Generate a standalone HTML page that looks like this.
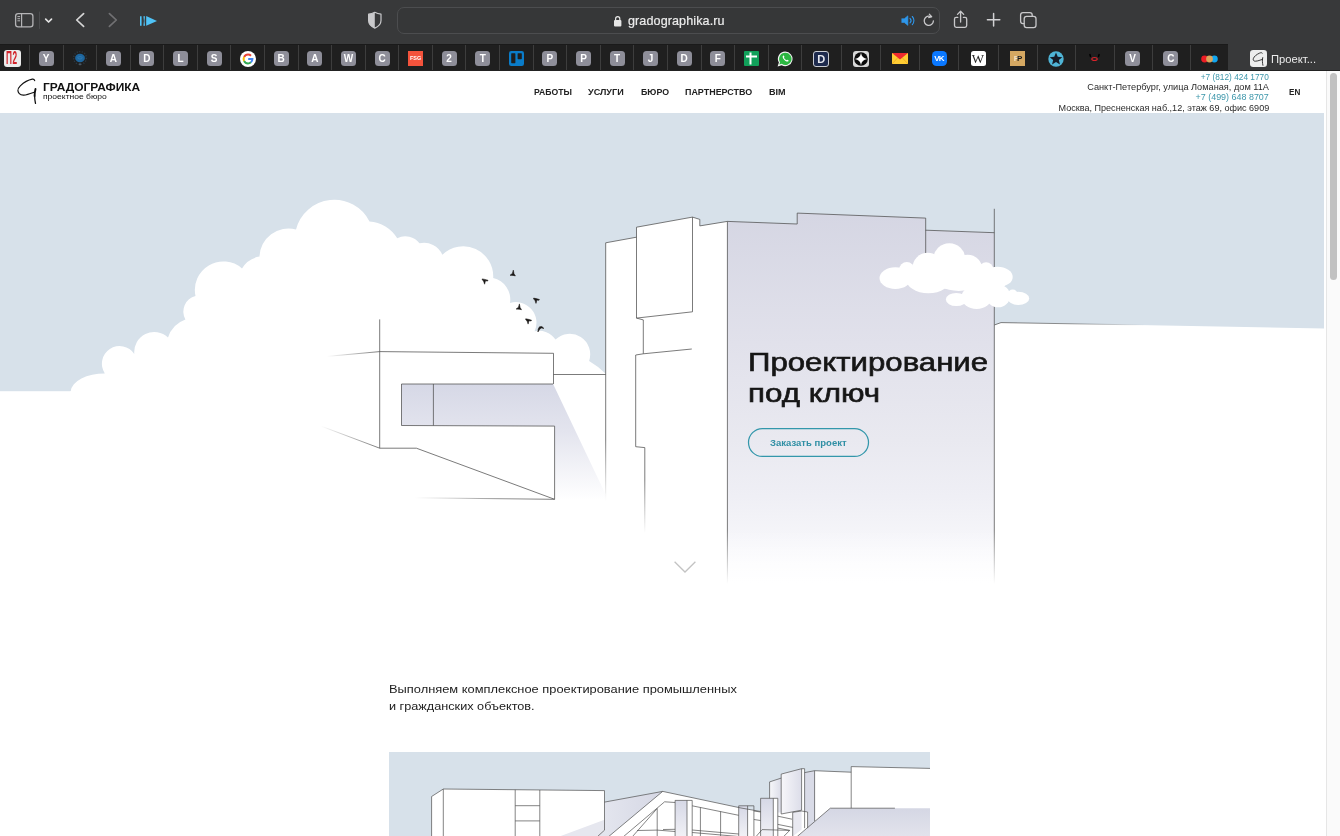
<!DOCTYPE html>
<html lang="ru">
<head>
<meta charset="utf-8">
<title>Проектирование под ключ</title>
<style>
*{box-sizing:border-box;margin:0;padding:0}
html,body{width:1340px;height:836px;overflow:hidden;background:#fff}
body{position:relative;-webkit-font-smoothing:antialiased;font-family:"Liberation Sans",sans-serif;color:#1d1d1d}
.abs{position:absolute}
#toolbar{left:0;top:0;width:1340px;height:45px;background:#38393a}
#toolbar svg{position:absolute;left:0;top:0}
#urlbar{left:396.5px;top:7px;width:543.5px;height:27px;border:1px solid #4c4d4f;border-radius:7px;background:#363738}
#urltext{left:627.5px;top:12px;height:18px;line-height:18px;font-size:13px;color:#ececec;-webkit-text-stroke:.2px #ececec;white-space:nowrap;letter-spacing:.1px;transform-origin:0 50%}
#tabbar{left:0;top:44px;width:1340px;height:27px;background:#1f1f1f;border-top:1px solid #1a1a1a}
.sep{position:absolute;top:45px;width:1px;height:26px;background:#3d3d3d}
.fav{position:absolute;top:51px;width:15px;height:15px;border-radius:3.5px;background:#8e8e99;color:#fff;font-weight:bold;font-size:10px;line-height:15px;text-align:center}
#acttab{left:1228px;top:44px;width:112px;height:27px;background:#38393a}
#acttxt{left:1270.700px;top:50.600px;font-size:11.5px;line-height:16px;color:#ececec;white-space:nowrap;transform-origin:0 50%}
#header{left:0;top:71px;width:1324px;height:42px;background:#fff}
.nav{position:absolute;top:86px;height:12px;line-height:12px;font-size:9px;font-weight:bold;color:#222;white-space:nowrap;transform-origin:0 50%}
.addr{position:absolute;right:71px;height:10px;line-height:10px;font-size:9px;color:#2a2a2a;white-space:nowrap;transform-origin:100% 50%}
.tel{color:#3d97ab}
#tabline{left:0;top:70px;width:1340px;height:1px;background:#222}
#scroll{left:1325.500px;top:71px;width:14.500px;height:765px;background:#fafafa;border-left:1px solid #e6e6e6}
#thumb{left:1330px;top:73px;width:7px;height:207px;border-radius:4px;background:#c1c1c1}
#h1{left:747.600px;top:347px;font-size:25px;line-height:31px;font-weight:normal;-webkit-text-stroke:.6px #161616;color:#161616;white-space:nowrap;transform-origin:0 0}
#btn{left:748px;top:429px;width:121px;height:28px;border:1px solid #3c98ab;border-radius:14px}
#btntxt{left:770px;top:437px;font-size:8.5px;line-height:12px;font-weight:bold;color:#2f8fa4;white-space:nowrap;transform-origin:0 50%}
.p{position:absolute;left:389px;font-size:11.5px;line-height:16px;color:#222;white-space:nowrap;transform-origin:0 50%}
#urltext{transform:scaleX(0.9671)}
#acttxt{transform:scaleX(.975)}
#logo1{transform:scaleX(1.1935)}
#logo2{transform:scaleX(1.1348)}
#n1{transform:scaleX(0.9595)}
#n2{transform:scaleX(1.0096)}
#n3{transform:scaleX(0.9777)}
#n4{transform:scaleX(0.9928)}
#n5{transform:scaleX(1.0061)}
#n6{transform:scaleX(0.9026)}
#a1{transform:scaleX(0.9226)}
#a2{transform:scaleX(1.0215)}
#a3{transform:scaleX(0.9931)}
#a4{transform:scaleX(1.0070)}
#h1a{display:inline-block;transform-origin:0 50%;transform:scaleX(1.2458)}
#h1b{display:inline-block;transform-origin:0 50%;transform:scaleX(1.2527)}
#btntxt{transform:scaleX(1.1200)}
#p1{transform:scaleX(1.1180)}
#p2{transform:scaleX(1.1023)}
</style>
</head>
<body>
<div id="wrap" style="position:absolute;left:0;top:0;width:1340px;height:836px;will-change:transform;transform:translateZ(0)">
<!--TOOLBAR-->
<div id="toolbar" class="abs">
<div id="urlbar" class="abs"></div>
<svg width="1340" height="45" viewBox="0 0 1340 45" fill="none" stroke-linecap="round" stroke-linejoin="round">
<!-- sidebar -->
<rect x="15.6" y="13.6" width="17.3" height="13.2" rx="2.6" stroke="#b4b4b6" stroke-width="1.3"/>
<path d="M21.6 13.8V26.6" stroke="#b4b4b6" stroke-width="1.2"/>
<path d="M17.8 16.6h1.9M17.8 18.7h1.9M17.8 20.8h1.9" stroke="#b4b4b6" stroke-width="1"/>
<path d="M39.5 12v16.5" stroke="#4c4d4f" stroke-width="1"/>
<path d="M45.7 19.2l2.9 2.8 2.9-2.8" stroke="#e4e4e4" stroke-width="1.7"/>
<!-- back / forward -->
<path d="M83.6 13.6l-6.9 6.4 6.9 6.4" stroke="#d6d6d6" stroke-width="1.7"/>
<path d="M109.4 13.6l6.9 6.4-6.9 6.4" stroke="#717173" stroke-width="1.7"/>
<!-- blue play icon -->
<path d="M140 16.2h1.6v9.6H140zM143.4 16.2h1.6l-.5 4.8.5 4.8h-1.6l.5-4.8z" fill="#4fc3f7" stroke="none"/>
<path d="M146.2 16l10.8 4.9-10.8 4.9z" fill="#4fc3f7" stroke="none"/>
<!-- shield -->
<path d="M374.8 12.3c2 1.1 4 1.7 6.2 1.9v6.3c0 3.6-2.4 6-6.2 7.6-3.800-1.600-6.200-4-6.200-7.600v-6.300c2.200-.2 4.200-.8 6.200-1.900z" stroke="#c9c9cb" stroke-width="1.2"/>
<path d="M374.8 12.3v15.8c-3.800-1.600-6.200-4-6.200-7.600v-6.300c2.200-.2 4.200-.8 6.200-1.900z" fill="#c9c9cb" stroke="none"/>
<!-- lock -->
<rect x="614" y="20" width="7.4" height="6.6" rx="1.1" fill="#e6e6e6" stroke="none"/>
<path d="M615.600 20.400v-1.700a2.100 2.100 0 0 1 4.200 0v1.700" stroke="#e6e6e6" stroke-width="1.2"/>
<!-- speaker -->
<path d="M902 18.700h2.300l3.600-2.900v9.600l-3.600-2.900H902z" fill="#2e96ea" stroke="#2e96ea" stroke-width=".6"/>
<path d="M910 18.300a3.300 3.300 0 0 1 0 4.600" stroke="#2e96ea" stroke-width="1.100"/>
<path d="M912.300 16.500a6 6 0 0 1 0 8.200" stroke="#2e96ea" stroke-width="1.100"/>
<!-- reload -->
<path d="M933.400 20.800a4.600 4.600 0 1 1-2.300-4" stroke="#c9c9cb" stroke-width="1.300"/>
<path d="M929.300 14.200l2.400 2.500-3 .9" stroke="#c9c9cb" stroke-width="1.200"/>
<!-- share -->
<path d="M957.800 17.400h-1.600a1.700 1.700 0 0 0-1.700 1.700v6.500a1.700 1.700 0 0 0 1.700 1.700h8.800a1.700 1.700 0 0 0 1.700-1.700v-6.500a1.700 1.700 0 0 0-1.700-1.700h-1.600" stroke="#c9c9cb" stroke-width="1.300"/>
<path d="M960.600 22V11.600M957.500 14.400l3.100-3.100 3.100 3.100" stroke="#c9c9cb" stroke-width="1.300"/>
<!-- plus -->
<path d="M987.400 19.800h12.400M993.600 13.600V26" stroke="#d2d2d4" stroke-width="1.500"/>
<!-- tabs -->
<rect x="1024.200" y="16.400" width="11.800" height="11.200" rx="2.400" stroke="#c9c9cb" stroke-width="1.300"/>
<path d="M1024 23.600h-1a2.400 2.400 0 0 1-2.400-2.400v-6.200a2.400 2.400 0 0 1 2.400-2.400h6.800a2.400 2.400 0 0 1 2.400 2.400v1" stroke="#c9c9cb" stroke-width="1.300"/>
</svg>
<div id="urltext" class="abs">gradographika.ru</div>
</div>
<!--TABBAR-->
<div id="tabbar" class="abs"></div>
<div class="sep" style="left:28.9px"></div>
<div class="sep" style="left:62.5px"></div>
<div class="sep" style="left:96.1px"></div>
<div class="sep" style="left:129.6px"></div>
<div class="sep" style="left:163.2px"></div>
<div class="sep" style="left:196.8px"></div>
<div class="sep" style="left:230.4px"></div>
<div class="sep" style="left:264.0px"></div>
<div class="sep" style="left:297.5px"></div>
<div class="sep" style="left:331.1px"></div>
<div class="sep" style="left:364.7px"></div>
<div class="sep" style="left:398.3px"></div>
<div class="sep" style="left:431.9px"></div>
<div class="sep" style="left:465.4px"></div>
<div class="sep" style="left:499.0px"></div>
<div class="sep" style="left:532.6px"></div>
<div class="sep" style="left:566.2px"></div>
<div class="sep" style="left:599.8px"></div>
<div class="sep" style="left:633.3px"></div>
<div class="sep" style="left:666.9px"></div>
<div class="sep" style="left:700.5px"></div>
<div class="sep" style="left:734.1px"></div>
<div class="sep" style="left:767.7px"></div>
<div class="sep" style="left:801.2px"></div>
<div class="sep" style="left:840.5px"></div>
<div class="sep" style="left:879.8px"></div>
<div class="sep" style="left:919.0px"></div>
<div class="sep" style="left:958.2px"></div>
<div class="sep" style="left:997.5px"></div>
<div class="sep" style="left:1037.0px"></div>
<div class="sep" style="left:1075.3px"></div>
<div class="sep" style="left:1113.7px"></div>
<div class="sep" style="left:1152.0px"></div>
<div class="sep" style="left:1190.0px"></div>
<div class="fav" style="left:4px;top:50px;width:17px;height:17px;border-radius:3px;background:#ececec;color:#d2232a;overflow:hidden"><span style="position:absolute;left:2.400px;top:-1.600px;font-size:18px;line-height:20px;font-weight:bold;white-space:nowrap;display:block;transform-origin:0 50%;transform:scaleX(.46);letter-spacing:1px">П2</span></div>
<div class="fav" style="left:38.7px">Y</div>
<svg class="abs" style="left:71.8px;top:51px" width="16" height="16" viewBox="0 0 16 16"><circle cx="8" cy="7" r="6.400" fill="none" stroke="#2c3944" stroke-width="1.400" stroke-dasharray="1.100 1.500"/><ellipse cx="8" cy="7" rx="4.900" ry="4.200" fill="#1d659d"/><ellipse cx="8" cy="6.800" rx="2.200" ry="1.200" fill="none" stroke="#3784bd" stroke-width=".6"/><circle cx="8" cy="13.300" r="1.100" fill="#4d5963"/></svg>
<div class="fav" style="left:105.8px">A</div>
<div class="fav" style="left:139.4px">D</div>
<div class="fav" style="left:173.0px">L</div>
<div class="fav" style="left:206.6px">S</div>
<svg class="abs" style="left:239.7px;top:50.5px" width="16" height="16" viewBox="0 0 16 16"><circle cx="8" cy="8" r="8" fill="#fff"/><path d="M8 3.600a4.400 4.400 0 0 1 3 1.150" fill="none" stroke="#ea4335" stroke-width="2"/><path d="M8 3.600a4.400 4.400 0 0 0-3.900 2.400" fill="none" stroke="#ea4335" stroke-width="2"/><path d="M4.100 6a4.400 4.400 0 0 0 0 4" fill="none" stroke="#fbbc05" stroke-width="2"/><path d="M4.100 10a4.400 4.400 0 0 0 3.900 2.400 4.400 4.400 0 0 0 2.900-1.100" fill="none" stroke="#34a853" stroke-width="2"/><path d="M10.900 11.300a4.400 4.400 0 0 0 1.500-3.300H8.200" fill="none" stroke="#4285f4" stroke-width="2"/></svg>
<div class="fav" style="left:273.7px">B</div>
<div class="fav" style="left:307.3px">A</div>
<div class="fav" style="left:340.9px">W</div>
<div class="fav" style="left:374.5px">C</div>
<div class="fav" style="left:408.1px;border-radius:0;background:#f4533c;font-size:5.500px;letter-spacing:-.1px">FSG</div>
<div class="fav" style="left:441.6px">2</div>
<div class="fav" style="left:475.2px">T</div>
<svg class="abs" style="left:508.8px;top:51px" width="15" height="15" viewBox="0 0 15 15"><rect width="15" height="15" rx="2.200" fill="#0a7cc9"/><rect x="2.200" y="2.200" width="4.200" height="10" rx=".6" fill="#1e1e1e"/><rect x="8.600" y="2.200" width="4.200" height="6" rx=".6" fill="#1e1e1e"/></svg>
<div class="fav" style="left:542.4px">P</div>
<div class="fav" style="left:576.0px">P</div>
<div class="fav" style="left:609.5px">T</div>
<div class="fav" style="left:643.1px">J</div>
<div class="fav" style="left:676.7px">D</div>
<div class="fav" style="left:710.3px">F</div>
<svg class="abs" style="left:743.9px;top:51px" width="15" height="15" viewBox="0 0 15 15"><rect width="15" height="15" rx="1" fill="#11a05a"/><path d="M2 5.600h11M6.500 1.400v12.200" stroke="#fff" stroke-width="2" fill="none"/></svg>
<svg class="abs" style="left:776.9px;top:50.5px" width="16" height="16" viewBox="0 0 16 16"><path d="M8.200 .6a7.300 7.300 0 0 0-6.300 11l-1.300 3.900 4.100-1.200A7.300 7.300 0 1 0 8.200 .6z" fill="#f2f2f2"/><path d="M8.200 1.800a6.100 6.100 0 0 0-5.100 9.400l-.8 2.400 2.500-.8A6.100 6.100 0 1 0 8.200 1.800z" fill="#2bb741"/><path d="M6 4.800c.500-.5 1-.2 1.300.7.200.6-.4.900-.2 1.400.5 1 1.200 1.700 2.200 2.200.5.200.8-.5 1.400-.200.900.4 1.200.8.700 1.300-.8.800-2.300.5-4-1.200C5.700 7.300 5.200 5.600 6 4.800z" fill="#fff"/></svg>
<div class="fav" style="left:813.3px;top:50.5px;width:16px;height:16px;border-radius:3px;background:#1d2a4d;border:1px solid #c9ccd3;font-size:11px;line-height:14px;color:#e6e8ee">D</div>
<svg class="abs" style="left:852.5px;top:50.5px" width="16" height="16" viewBox="0 0 16 16"><rect width="16" height="16" rx="3" fill="#d8d8d8"/><circle cx="8" cy="8" r="6.800" fill="#0b0b0b"/><path d="M8 1.800c.5 3.700 2.500 5.700 6.200 6.200-3.700.5-5.700 2.500-6.200 6.200-.5-3.700-2.500-5.700-6.200-6.200 3.700-.5 5.700-2.500 6.200-6.200z" fill="#fff"/></svg>
<svg class="abs" style="left:892.0px;top:53px" width="16" height="11" viewBox="0 0 16 11"><rect width="16" height="11" fill="#ffcc33"/><path d="M0 0h16l-8 6.600z" fill="#ee2a2e"/><path d="M0 11l5.500-6M16 11l-5.500-6" stroke="#e9a81f" stroke-width=".8"/></svg>
<div class="fav" style="left:931.9px;border-radius:4.500px;background:#0a78ff;font-size:8px;letter-spacing:-.7px;text-indent:-.8px">VK</div>
<div class="fav" style="left:970.5px;border-radius:2.500px;background:#fff;color:#222;font-family:'Liberation Serif',serif;font-weight:normal;font-size:13px;line-height:15px">W</div>
<div class="fav" style="left:1010.0px;border-radius:0;background:#d5a862;color:#1a1a1a;font-size:8px;letter-spacing:-2px;text-indent:-1px"><span style="color:#f2e2c6">P</span>P</div>
<svg class="abs" style="left:1048.3px;top:50.500px" width="16" height="16" viewBox="0 0 16 16"><circle cx="8" cy="8" r="7.700" fill="#4fb4d6"/><path d="M8 1.600l1.750 4.200 4.550 .35-3.450 2.950 1.100 4.400L8 11.100l-3.950 2.400 1.100-4.400L1.700 6.150l4.550-.35z" fill="#161b26"/></svg>
<svg class="abs" style="left:1087.0px;top:51px" width="15" height="15" viewBox="0 0 15 15"><path d="M2.900 3.600l.6 1.900M12.100 3.600l-.6 1.900" stroke="#000" stroke-width="1.500" stroke-linecap="round"/><ellipse cx="7.500" cy="8" rx="2.700" ry="1.500" fill="none" stroke="#d8232a" stroke-width="1.100"/></svg>
<div class="fav" style="left:1125.0px">V</div>
<div class="fav" style="left:1163.3px">C</div>
<svg class="abs" style="left:1200.8px;top:55px" width="17" height="8" viewBox="0 0 17 8"><circle cx="3.600" cy="4" r="3.400" fill="#ec1c24"/><circle cx="13.400" cy="4" r="3.400" fill="#12a5ee"/><circle cx="8.500" cy="4" r="3.400" fill="#d9a55c"/></svg>
<div id="acttab" class="abs"></div>
<svg class="abs" style="left:1250px;top:50px" width="17" height="17" viewBox="0 0 17 17"><rect width="17" height="17" rx="3.200" fill="#ededed"/><path d="M12.300 3.100C11.800 2.400 10.800 2.600 9.600 3.100C6.800 4.300 4 6.400 3.300 8.700C2.900 10.200 3.800 11.200 5.400 11.200C7.800 11.100 10.200 10.100 12.600 9.300M12.700 7.600C12.200 9.800 12.300 12.600 12.900 15.300" fill="none" stroke="#1a1a1a" stroke-width=".85" stroke-linecap="round"/></svg>
<div id="acttxt" class="abs">Проект...</div>
<!--PAGE-->
<div id="header" class="abs"></div>
<svg class="abs" style="left:14px;top:76px" width="26" height="30" viewBox="14 76 26 30" fill="none" stroke="#111" stroke-linecap="round" stroke-linejoin="round"><path d="M34.700 80.600C34.300 79.300 33.400 79 32.300 79.200C28 80 23 83.300 20.300 85.900C18.600 87.600 17.700 89.200 17.900 90.700C18.100 92.200 18.600 93 19.300 93.700C20.400 94.800 22 95.300 23.700 95.200C27.200 94.900 31 93.400 34.600 92.100" stroke-width="1.200"/><path d="M35.500 89C34.900 91.400 34.600 93.700 34.600 95.900" stroke-width="1.900"/><path d="M34.600 95.900C34.700 98.500 35 101 35.500 103.400" stroke-width="1.300"/></svg>
<div id="logo1" class="abs" style="left:42.500px;top:81.700px;font-size:10px;line-height:12px;font-weight:bold;color:#111;white-space:nowrap;transform-origin:0 50%">ГРАДОГРАФИКА</div>
<div id="logo2" class="abs" style="left:42.500px;top:91.500px;font-size:7.500px;line-height:10px;color:#111;white-space:nowrap;transform-origin:0 50%">проектное бюро</div>
<div class="nav" id="n1" style="left:533.500px">РАБОТЫ</div>
<div class="nav" id="n2" style="left:588px">УСЛУГИ</div>
<div class="nav" id="n3" style="left:640.500px">БЮРО</div>
<div class="nav" id="n4" style="left:685px">ПАРТНЕРСТВО</div>
<div class="nav" id="n5" style="left:768.500px">BIM</div>
<div class="nav" id="n6" style="left:1289px">EN</div>
<div class="addr tel" id="a1" style="top:72px">+7 (812) 424 1770</div>
<div class="addr" id="a2" style="top:82.300px">Санкт-Петербург, улица Ломаная, дом 11А</div>
<div class="addr tel" id="a3" style="top:92.300px">+7 (499) 648 8707</div>
<div class="addr" id="a4" style="top:102.600px">Москва, Пресненская наб.,12, этаж 69, офис 6909</div>
<!--HERO-->
<svg id="hero" class="abs" style="left:0;top:113px" width="1324" height="480" viewBox="0 113 1324 480" fill="none">
<defs>
<linearGradient id="gwall" x1="0" y1="213" x2="0" y2="584" gradientUnits="userSpaceOnUse"><stop offset="0" stop-color="#d5d6e3"/><stop offset=".35" stop-color="#e1e1eb"/><stop offset=".61" stop-color="#e9e9f0"/><stop offset=".765" stop-color="#efeff5"/><stop offset=".868" stop-color="#f5f5f9"/><stop offset="1" stop-color="#fcfcfe"/></linearGradient>
<linearGradient id="grec" x1="0" y1="384" x2="0" y2="500" gradientUnits="userSpaceOnUse"><stop offset="0" stop-color="#d6d8e6"/><stop offset=".4" stop-color="#e3e4ee"/><stop offset="1" stop-color="#ffffff"/></linearGradient>
<linearGradient id="gfade" x1="0" y1="530" x2="0" y2="584" gradientUnits="userSpaceOnUse"><stop offset="0" stop-color="#fff" stop-opacity="0"/><stop offset="1" stop-color="#fff" stop-opacity="1"/></linearGradient>
<linearGradient id="gv1" x1="0" y1="440" x2="0" y2="501" gradientUnits="userSpaceOnUse"><stop offset="0" stop-color="#4f4f4f" stop-opacity="1"/><stop offset="1" stop-color="#4f4f4f" stop-opacity="0"/></linearGradient>
<linearGradient id="gv2" x1="0" y1="480" x2="0" y2="533" gradientUnits="userSpaceOnUse"><stop offset="0" stop-color="#4f4f4f" stop-opacity="1"/><stop offset="1" stop-color="#4f4f4f" stop-opacity="0"/></linearGradient>
<linearGradient id="gl1" x1="327" y1="0" x2="379.700" y2="0" gradientUnits="userSpaceOnUse"><stop offset="0" stop-color="#4f4f4f" stop-opacity="0"/><stop offset="1" stop-color="#4f4f4f" stop-opacity="1"/></linearGradient>
<linearGradient id="gl2" x1="321" y1="0" x2="379.700" y2="0" gradientUnits="userSpaceOnUse"><stop offset="0" stop-color="#4f4f4f" stop-opacity="0"/><stop offset="1" stop-color="#4f4f4f" stop-opacity="1"/></linearGradient>
<linearGradient id="gl3" x1="415" y1="0" x2="554.600" y2="0" gradientUnits="userSpaceOnUse"><stop offset="0" stop-color="#4f4f4f" stop-opacity="0"/><stop offset=".6" stop-color="#4f4f4f" stop-opacity=".8"/><stop offset="1" stop-color="#4f4f4f" stop-opacity="1"/></linearGradient>
<linearGradient id="gl4" x1="994" y1="0" x2="1145" y2="0" gradientUnits="userSpaceOnUse"><stop offset="0" stop-color="#4f4f4f" stop-opacity="1"/><stop offset=".5" stop-color="#4f4f4f" stop-opacity=".8"/><stop offset="1" stop-color="#4f4f4f" stop-opacity="0"/></linearGradient>
<linearGradient id="gfadeL" x1="300" y1="0" x2="420" y2="0" gradientUnits="userSpaceOnUse"><stop offset="0" stop-color="#fff" stop-opacity="1"/><stop offset="1" stop-color="#fff" stop-opacity="0"/></linearGradient>
</defs>
<rect x="0" y="113" width="1324" height="480" fill="#fff"/>
<rect x="0" y="113" width="1324" height="278.200" fill="#d7e1ea"/>
<!-- big cloud -->
<path id="cloud" fill="#fff" d="M70.700 391.200A34 19 0 0 1 104.800 373.400A16.800 16.800 0 0 1 134.300 354A20 20 0 0 1 168 337.600A28 28 0 0 1 185.400 319.400A16 16 0 0 1 195.500 296A28.500 28.500 0 0 1 242 268.400A25 25 0 0 1 259.500 256.600A29 29 0 0 1 296 229.400A39.500 39.500 0 0 1 369.500 221.400A35 35 0 0 1 397.200 238.200A18 18 0 0 1 419.500 243.300A20 20 0 0 1 442.400 254.800A30 30 0 0 1 493.200 278A22 22 0 0 1 510 303A20.500 20.500 0 0 1 534.600 331.200A20 20 0 0 1 555.500 339.500A20.500 20.500 0 0 1 589.100 360.900Q598 366 606 374V400H60z"/>
<!-- right white mass -->
<path d="M994.300 325L1001 322.600L1324 328.500V400H994.300z" fill="#fff"/>
<path d="M994.300 325L1001 322.600L1150 325.100" stroke="url(#gl4)" stroke-width=".75"/>
<!-- towers -->
<path d="M605.700 592V242.800L636.500 237.200V227.200L692.500 217.100L699.800 219.400V225.900L727.400 221.400V592z" fill="#fff"/>
<path d="M727.400 592V221.400L797.200 224V213.100L925.700 218.100V230.200L994.300 232.700V592z" fill="url(#gwall)"/>
<g stroke="#4f4f4f" stroke-width=".75">
<path d="M605.700 440V242.800L636.500 237.200"/>
<path d="M605.700 440V501" stroke="url(#gv1)"/>
<path d="M636.500 318.100V227.200L692.500 217.100V311.800L636.500 318.100L643.300 319.900V353.800L635.700 355V446.700L644.800 447.600V480"/>
<path d="M644.800 480V533" stroke="url(#gv2)"/>
<path d="M643.300 353.800L691.800 349"/>
<path d="M692.500 217.100L699.800 219.400V225.900L727.400 221.400V584"/>
<path d="M727.400 221.400L797.200 224V213.100L925.700 218.100V230.200L994.300 232.700"/>
<path d="M925.700 230V268"/>
<path d="M994.300 208.800V584"/>
</g>
<!-- cantilever building -->
<path d="M401.500 384H553.100L605.400 494V500H554.600V426.100L401.500 425.500z" fill="url(#grec)"/>
<path d="M554.600 426.100V499.300L416.400 448.200H379.700V351.600L553.500 353.300V384H401.500V425.500z" fill="#fff" fill-opacity=".0"/>
<g stroke="#4f4f4f" stroke-width=".75">
<path d="M379.700 319.400V448.200H416.400L554.600 499.300V426.100L401.500 425.500V384H553.100"/>
<path d="M433.400 384V425.500"/>
<path d="M379.700 351.600L553.500 353.300V384"/>
<path d="M553.500 374.500H605.700"/>
<path d="M379.700 351.600L327 356.400" stroke="url(#gl1)"/>
<path d="M379.700 448.200L321 426.100" stroke="url(#gl2)"/>
<path d="M554.600 499.300L415 497.800" stroke="url(#gl3)"/>
</g>
<!-- fade bottom -->
<rect x="720" y="530" width="280" height="63" fill="url(#gfade)"/>
<!-- small cloud -->
<g fill="#fff">
<ellipse cx="895.400" cy="278.100" rx="15.900" ry="10.800"/><circle cx="906.800" cy="269.600" r="7.600"/><circle cx="927.700" cy="268" r="15.200"/><circle cx="949.300" cy="259.100" r="15.900"/><circle cx="967.700" cy="269.300" r="14.600"/><circle cx="986.100" cy="269.300" r="7"/><ellipse cx="997.500" cy="276.900" rx="15.200" ry="10.200"/><ellipse cx="928.400" cy="278.100" rx="22.800" ry="15.200"/><ellipse cx="958.800" cy="276.900" rx="25.400" ry="14"/><ellipse cx="990" cy="283.500" rx="15.500" ry="7"/><ellipse cx="912" cy="277" rx="12" ry="8"/>
<ellipse cx="956.300" cy="299.500" rx="10.400" ry="6.600"/><ellipse cx="976.600" cy="297.200" rx="15.200" ry="11.700"/><ellipse cx="998.100" cy="295.900" rx="12" ry="11.400"/><circle cx="1012.700" cy="294.600" r="5"/><ellipse cx="1018.400" cy="298.400" rx="10.800" ry="6.600"/>
</g>
<!-- birds -->
<g fill="#1a1716" stroke="#1a1716" stroke-width=".55" stroke-linejoin="round">
<path d="M482.200 278.900l2.600 .5 3.200 .9-.4 .8-2.100-.3-.9 3.400-1.100-3.300-1.200-.9z"/>
<path d="M513.300 270.100l.7 3.600 1.400 2.200-2.400-.5-3 -.1 2.400-1.900z"/>
<path d="M533.600 298.100l2.600 .5 3.200 .9-.4 .8-2.100-.3-.9 3.400-1.100-3.300-1.200-.9z"/>
<path d="M519.400 303.900l.7 3.600 1.400 2.200-2.400-.5-3 -.1 2.400-1.900z"/>
<path d="M525.700 318.800l2.600 .5 3.200 .9-.4 .8-2.100-.3-.9 3.400-1.100-3.300-1.200-.9z"/>
<path d="M537.900 332l.3-3 1.300-2.200 2.400-.2 2 1.800-2.600-.4-1.400 1z"/>
</g>
<rect x="748.500" y="428.600" width="120" height="27.800" rx="13.900" stroke="#3397ab" stroke-width="1.250"/>
<!-- scroll chevron -->
<path d="M674.600 561.800L685 572L695.400 561.800" stroke="#c3c3c3" stroke-width="1.300"/>
</svg>
<div id="h1" class="abs"><span id="h1a">Проектирование</span><br><span id="h1b">под ключ</span></div>
<div id="btntxt" class="abs">Заказать проект</div>
<!--CONTENT-->
<div class="p" id="p1" style="top:680.500px">Выполняем комплексное проектирование промышленных</div>
<div class="p" id="p2" style="top:697.800px">и гражданских объектов.</div>
<svg id="img2" class="abs" style="left:389px;top:751.500px" width="541" height="84.500" viewBox="389 751.500 541 84.500" fill="none">
<defs>
<linearGradient id="gcol" x1="0" y1="0" x2="0" y2="1"><stop offset="0" stop-color="#d6d8e6"/><stop offset="1" stop-color="#f1f1f6"/></linearGradient>
<linearGradient id="gpan" x1="0" y1="0" x2="1" y2="0"><stop offset="0" stop-color="#f7f7fa"/><stop offset="1" stop-color="#dcdde9"/></linearGradient>
<linearGradient id="gwedge" x1="604" y1="0" x2="663" y2="0" gradientUnits="userSpaceOnUse"><stop offset="0" stop-color="#e3e5ee"/><stop offset="1" stop-color="#d5d7e4"/></linearGradient>
<linearGradient id="gpar" x1="0" y1="808" x2="0" y2="836" gradientUnits="userSpaceOnUse"><stop offset="0" stop-color="#d5d7e4"/><stop offset="1" stop-color="#e2e3ec"/></linearGradient>
</defs>
<rect x="389" y="751.500" width="541" height="85" fill="#d7e1ea"/>
<!-- right blocks -->
<path d="M814.600 836V770.200L851.200 771.700V766.100L930 767.900V836z" fill="#fff"/>
<path d="M769.600 836V781.400L781.200 777.600V836z" fill="url(#gpan)"/>
<path d="M777.800 812H792.700V836H777.800z" fill="#fff"/>
<path d="M781.200 773.600L801.600 768.200V809.700L781.200 813.500z" fill="url(#gpan)"/>
<path d="M781.200 813.500L801.600 809.700V836H781.200z" fill="#fff"/>
<path d="M801.600 768.200H804.600V836H801.600z" fill="#fff"/>
<path d="M804.600 772.100L814.600 770.200V836H804.600z" fill="#d9dbe7"/>
<path d="M830.300 807.700H930V836H797.200z" fill="url(#gpar)"/>
<!-- wedge and pergola -->
<path d="M604.500 801.600L662.700 790.900L608.700 836H597.500L604.500 829.700z" fill="url(#gwedge)"/>
<path d="M662.700 790.900L740 807.300L760.600 811V836H608.700z" fill="#fff"/>
<!-- building 1 -->
<path d="M431.600 836V796L443.300 788.500L604.500 790.100V829.700L597.500 836z" fill="#fff"/>
<path d="M604.500 819.300L559.400 836H597.500L604.500 829.700z" fill="#e6e7ef"/>
<!-- columns -->
<path d="M675.100 799.900H687V836H675.100z" fill="url(#gcol)"/>
<path d="M738.700 805.300H747.600V836H738.700z" fill="url(#gcol)"/>
<path d="M753.900 810.500H760.600V836H753.900z" fill="#fff"/>
<path d="M760.600 797.800H777.800V836H760.600z" fill="#fff"/>
<path d="M760.600 797.800H773.300V836H760.600z" fill="url(#gcol)"/>
<path d="M792.700 811.800L801.600 810.500L807.600 811.500V827.600L797.200 836H792.700z" fill="#fff"/>
<path d="M792.700 811.800L801.600 810.500V829L792.700 836z" fill="#e9e9f1"/>
<g stroke="#4f4f4f" stroke-width=".7">
<path d="M431.600 836V796L443.300 788.500L604.500 790.100V829.700L597.500 836"/>
<path d="M443.300 788.500V836M515.200 789.300V836M539.800 789.500V836M515.200 805.200H539.800M515.200 820.400H539.800"/>
<path d="M604.500 801.600L662.700 790.900L740 807.300L760.600 811"/>
<path d="M662.700 790.900L608.700 836"/>
<path d="M623.600 836L664.600 801.300L675.100 802"/>
<path d="M692.200 805.300L738.700 814.800"/>
<path d="M632.500 836L657.200 808V836"/>
<path d="M637 830L657.200 829.600L675.100 831M663 829L675.100 828.800"/>
<path d="M675.100 836V799.900H692.200V836M687 799.900V836"/>
<path d="M700.400 807V836M720.600 811V836"/>
<path d="M692.200 829.500L738.700 833.500M692.200 832L738.700 836"/>
<path d="M738.700 836V805.300H753.900V836M747.600 805.300V836"/>
<path d="M753.900 810.500L760.600 811.500M753.900 819L760.600 820"/>
<path d="M760.600 836V797.800H777.800V836M773.300 797.800V836"/>
<path d="M769.600 797.800V781.400L781.200 777.600"/>
<path d="M781.200 773.600L801.600 768.200H804.600V827.600"/>
<path d="M781.200 773.600V813.500L801.600 809.700V768.200"/>
<path d="M777.800 815.700L792 818.700M777.800 823.900L792.700 826.900M777.800 827.600L789.700 829.900"/>
<path d="M792.700 836V811.800L801.600 810.500L807.600 811.500V827.600"/>
<path d="M756.100 836L762.100 829.100L789.700 829.900L783.700 836"/>
<path d="M804.600 772.100L814.600 770.200L851.200 771.700"/>
<path d="M814.600 770.200V820.500"/>
<path d="M851.200 807.700V766.100L930 767.900"/>
<path d="M797.200 836L830.300 807.700H894.900"/>
</g>
</svg>
<div id="tabline" class="abs"></div>
<div id="scroll" class="abs"></div>
<div id="thumb" class="abs"></div>
</div>
</body>
</html>
